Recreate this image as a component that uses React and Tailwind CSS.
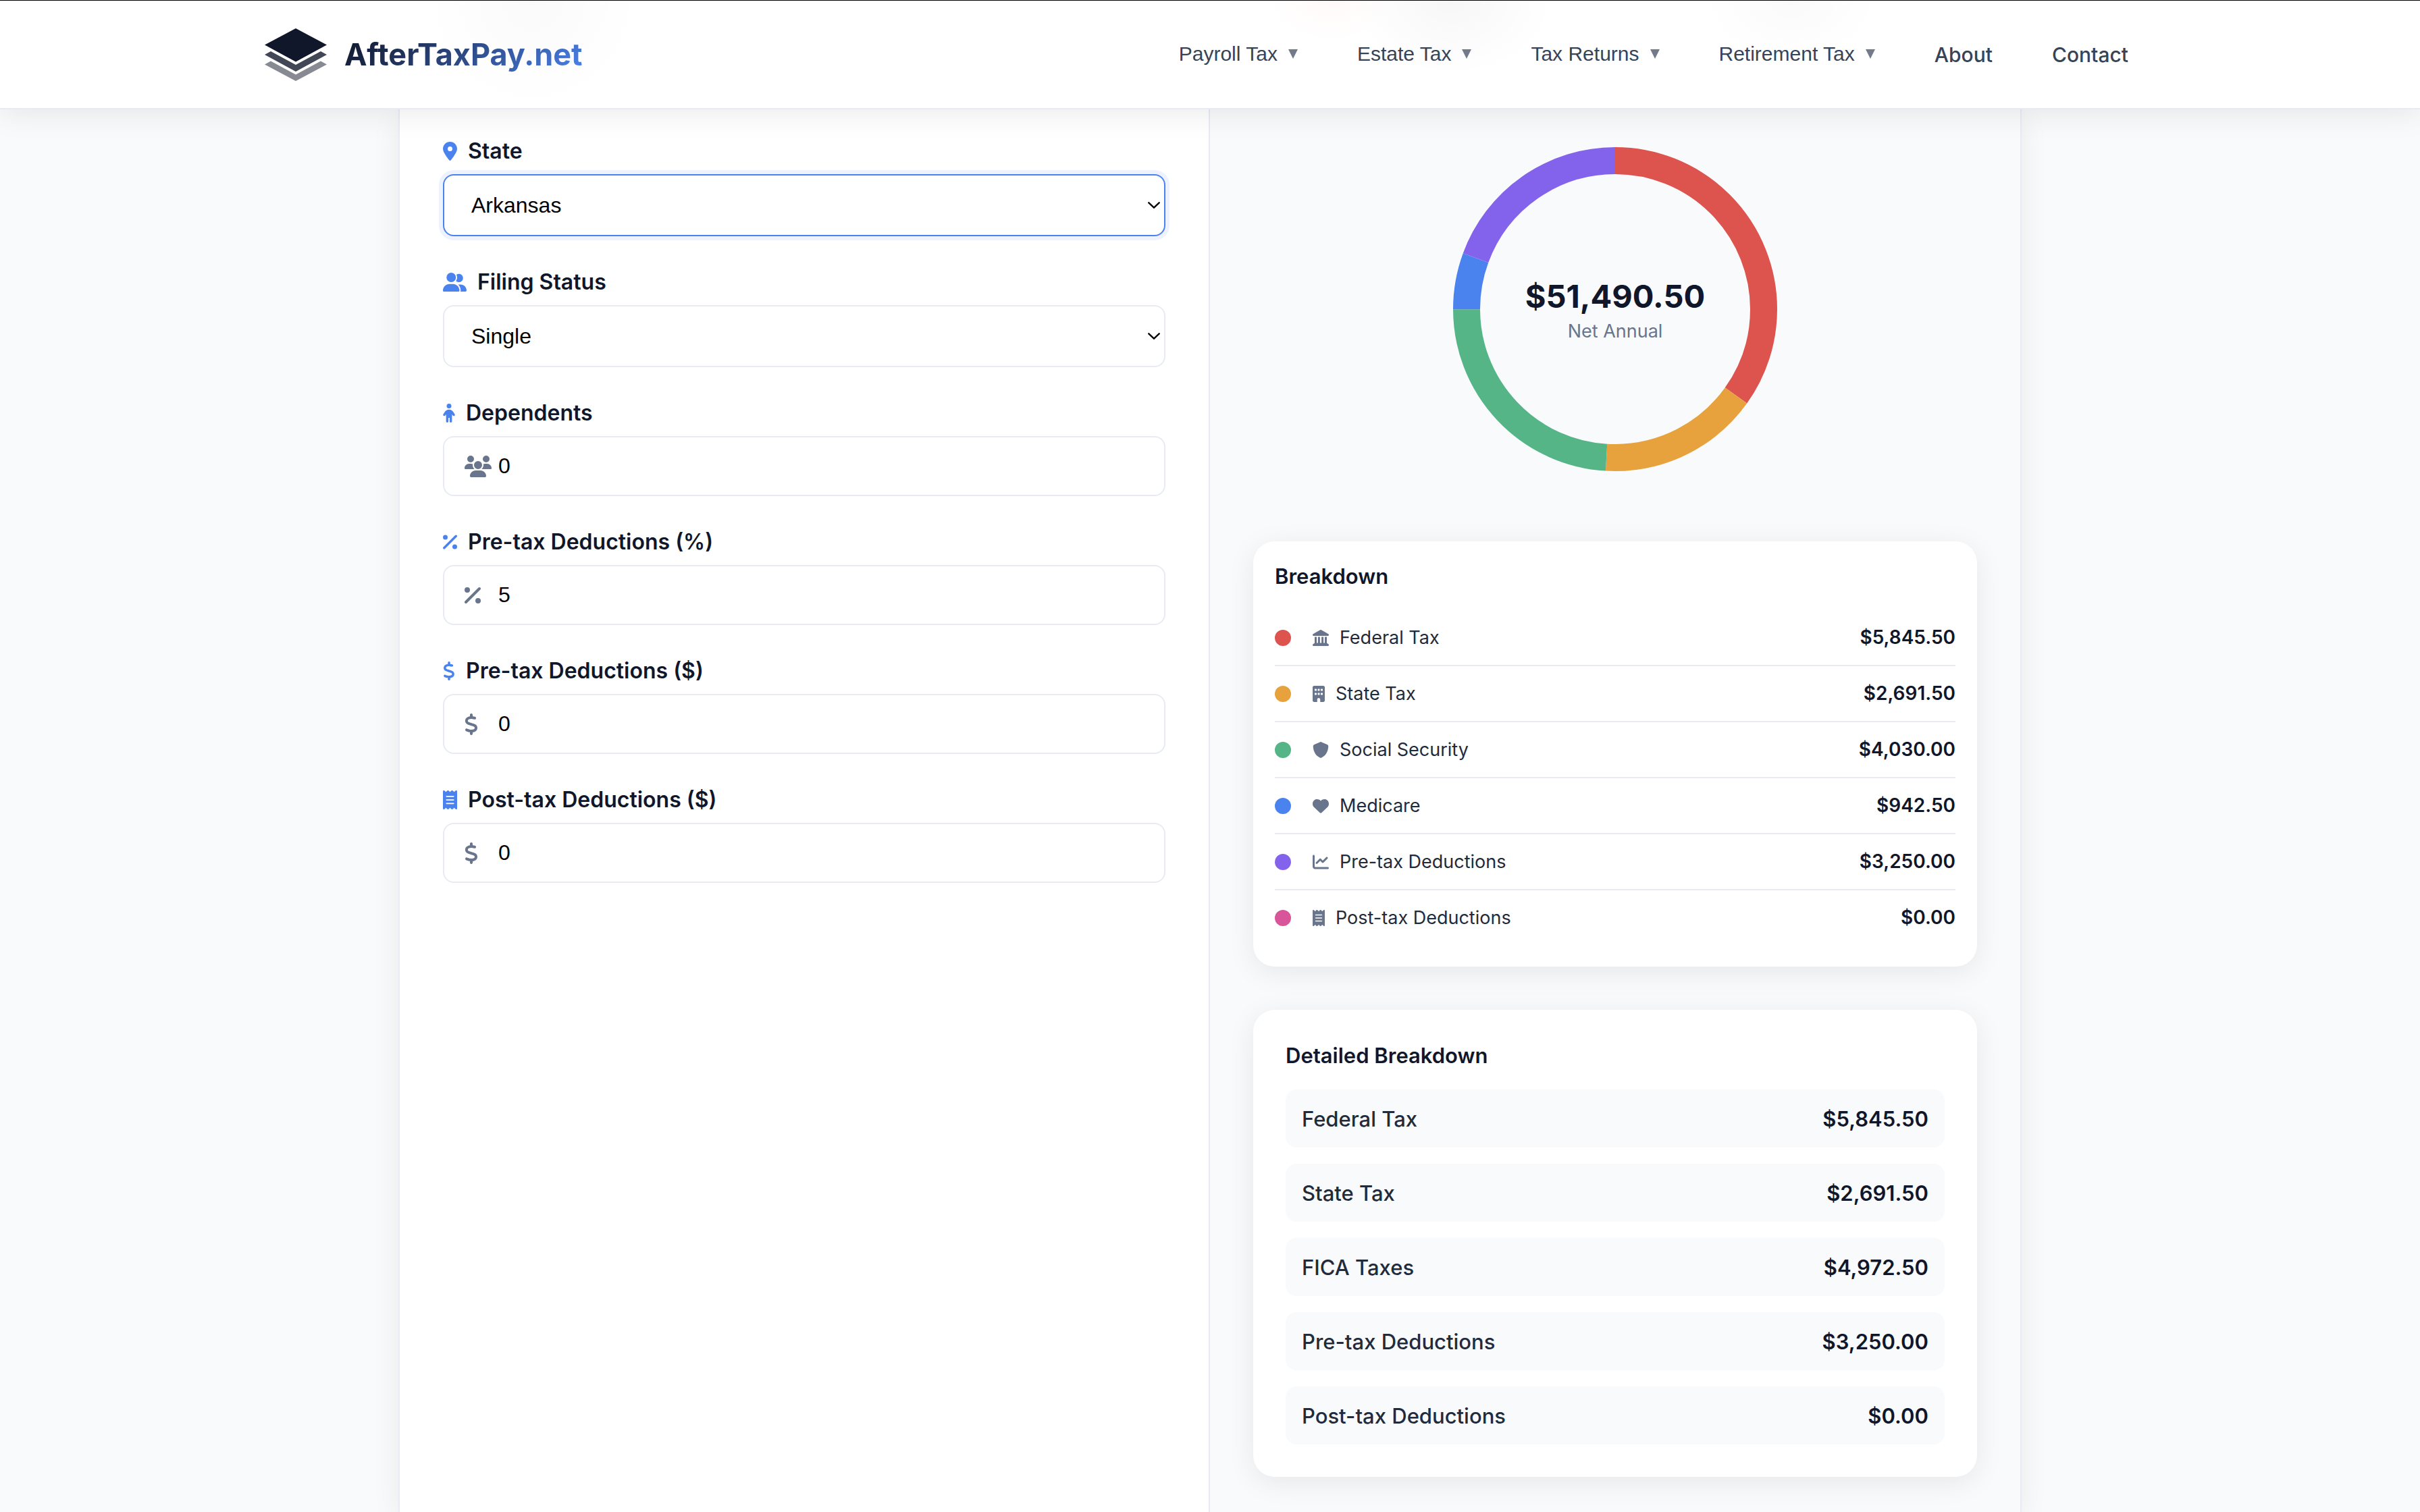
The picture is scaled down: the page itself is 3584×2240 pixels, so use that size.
import { useState } from 'react';
import {
    FaBuilding,
    FaChartLine,
    FaChild,
    FaDollarSign,
    FaHeart,
    FaLandmark,
    FaLocationDot,
    FaPercent,
    FaReceipt,
    FaShield,
    FaUserGroup,
    FaUsers,
} from 'react-icons/fa6';

const MENUS = ['Payroll Tax', 'Estate Tax', 'Tax Returns', 'Retirement Tax'];
const LINKS = ['About', 'Contact'];

const BREAKDOWN = [
    { label: 'Federal Tax', value: 5845.5, icon: FaLandmark, iconWidth: 'w-6', dot: 'bg-[#dd534e]', stroke: 'stroke-[#dd534e]' },
    { label: 'State Tax', value: 2691.5, icon: FaBuilding, iconWidth: 'w-[18px]', dot: 'bg-[#e7a23e]', stroke: 'stroke-[#e7a23e]' },
    { label: 'Social Security', value: 4030, icon: FaShield, iconWidth: 'w-6', dot: 'bg-[#56b587]', stroke: 'stroke-[#56b587]' },
    { label: 'Medicare', value: 942.5, icon: FaHeart, iconWidth: 'w-6', dot: 'bg-[#4b83ee]', stroke: 'stroke-[#4b83ee]' },
    { label: 'Pre-tax Deductions', value: 3250, icon: FaChartLine, iconWidth: 'w-6', dot: 'bg-[#8463ec]', stroke: 'stroke-[#8463ec]' },
    { label: 'Post-tax Deductions', value: 0, icon: FaReceipt, iconWidth: 'w-[18px]', dot: 'bg-[#d95599]', stroke: 'stroke-[#d95599]' },
];

const DETAILS = [
    { label: 'Federal Tax', value: 5845.5 },
    { label: 'State Tax', value: 2691.5 },
    { label: 'FICA Taxes', value: 4972.5 },
    { label: 'Pre-tax Deductions', value: 3250 },
    { label: 'Post-tax Deductions', value: 0 },
];

const money = (n) => n.toLocaleString('en-US', { style: 'currency', currency: 'USD' });

function Logo() {
    return (
        <a href="#" className="flex items-center gap-[26px]">
            <svg viewBox="0 0 92 78" className="w-[92px] h-[78px]" aria-hidden="true">
                <path d="M0 24.5 46 0l46 24.5-46 25z" fill="#10172a" />
                <path d="M0 39l9-5 37 20 37-20 9 5-46 25z" fill="#424756" />
                <path d="M0 53.5l9-5 37 20 37-20 9 5L46 78z" fill="#878a93" />
            </svg>
            <span className="text-[45px] leading-[60px] font-bold text-transparent bg-clip-text bg-linear-135 from-[#10172a] to-[#4b83ee]">
                AfterTaxPay.net
            </span>
        </a>
    );
}

function Header() {
    return (
        <header className="sticky top-0 z-10 bg-white bg-[radial-gradient(160px_160px_at_22%_0%,rgba(0,0,0,0.02),transparent),radial-gradient(90px_60px_at_55%_0%,rgba(255,80,60,0.03),transparent),radial-gradient(150px_110px_at_60%_0%,rgba(0,0,0,0.03),transparent),radial-gradient(130px_90px_at_74%_0%,rgba(0,0,0,0.02),transparent)] border-t border-t-black border-b-2 border-b-[#e8ebf1] shadow-[0_8px_40px_rgba(0,0,0,0.08)]">
            <div className="max-w-[2800px] mx-auto h-[159px] flex items-center justify-between">
                <Logo />
                <nav className="flex items-center gap-2">
                    {MENUS.map((name) => (
                        <button
                            key={name}
                            type="button"
                            className="flex items-center gap-4 px-10 pb-0.5 font-['Liberation_Sans',sans-serif] text-[30px] leading-[36px] text-[#374357]"
                        >
                            {name}
                            <svg viewBox="0 0 14 14" className="w-[14px] h-[14px]" aria-hidden="true">
                                <path d="M0 0h14L7 14z" fill="#737b8a" />
                            </svg>
                        </button>
                    ))}
                    {LINKS.map((name) => (
                        <a key={name} href="#" className="px-10 text-[30px] leading-[36px] font-medium text-[#374357]">
                            {name}
                        </a>
                    ))}
                </nav>
            </div>
        </header>
    );
}

function FieldLabel({ id, icon: Icon, iconWidth, children }) {
    return (
        <label htmlFor={id} className="flex items-center gap-4 mb-[14px] text-[32px] leading-[40px] font-semibold text-[#10172a]">
            <Icon className={`h-[28px] text-[#4b83ee] ${iconWidth}`} />
            {children}
        </label>
    );
}

function SelectField({ id, label, icon, iconWidth, options, active }) {
    return (
        <div>
            <FieldLabel id={id} icon={icon} iconWidth={iconWidth}>{label}</FieldLabel>
            <div className="relative">
                <select
                    id={id}
                    className={`block w-full h-[92px] pl-10 pr-16 appearance-none rounded-2xl border-2 bg-white font-['Liberation_Sans',sans-serif] text-[32px] text-black outline-none ${active
                            ? 'border-[#4b83ee] shadow-[0_0_0_6px_rgba(75,131,238,0.1)]'
                            : 'border-[#e8ebf1]'
                        }`}
                >
                    {options.map((o) => <option key={o}>{o}</option>)}
                </select>
                <svg viewBox="0 0 18 10" className="absolute right-2 top-1/2 -translate-y-1/2 w-[18px] h-[10px] pointer-events-none" aria-hidden="true">
                    <path d="M1.3 1.3 9 8.6l7.7-7.3" fill="none" stroke="#000" strokeWidth="2.4" strokeLinecap="round" />
                </svg>
            </div>
        </div>
    );
}

function NumberField({ id, label, icon, iconWidth, inner: Inner, innerWidth, initial }) {
    const [value, setValue] = useState(initial);

    return (
        <div>
            <FieldLabel id={id} icon={icon} iconWidth={iconWidth}>{label}</FieldLabel>
            <div className="relative">
                <Inner className={`absolute left-8 top-1/2 -translate-y-1/2 h-8 text-[#68758c] ${innerWidth}`} />
                <input
                    id={id}
                    type="text"
                    inputMode="decimal"
                    value={value}
                    onChange={(e) => setValue(e.target.value)}
                    className="block w-full h-[89px] pl-20 pr-8 rounded-2xl border-2 border-[#e8ebf1] font-['Liberation_Sans',sans-serif] text-[32px] text-black"
                />
            </div>
        </div>
    );
}

function Donut() {
    const total = BREAKDOWN.reduce((sum, b) => sum + b.value, 0);
    let start = 0;

    return (
        <div className="relative w-[480px] h-[480px] mx-auto pt-2 flex flex-col items-center justify-center">
            <svg viewBox="0 0 480 480" className="absolute inset-0 -rotate-90" aria-hidden="true">
                {BREAKDOWN.filter((b) => b.value > 0).map((b) => {
                    const part = (b.value / total) * 100;
                    const offset = -start;
                    start += part;
                    return (
                        <circle
                            key={b.label}
                            cx="240"
                            cy="240"
                            r="220"
                            fill="none"
                            strokeWidth="40"
                            pathLength="100"
                            strokeDasharray={`${part} ${100 - part}`}
                            strokeDashoffset={offset}
                            className={b.stroke}
                        />
                    );
                })}
            </svg>
            <div className="text-[47px] leading-[58px] font-bold text-[#10172a]">$51,490.50</div>
            <div className="text-[27px] leading-[46px] text-[#68758c]">Net Annual</div>
        </div>
    );
}

export default function App() {
    return (
        <div className="min-h-screen flex flex-col bg-[#f9fafc] font-[Inter,sans-serif]">
            <Header />

            <main className="flex-1 w-full max-w-[2400px] mx-auto grid grid-cols-2 shadow-[0_0_0_2px_#e8ebf3,0_8px_40px_rgba(0,0,0,0.08)]">
                {/* Inputs */}
                <form className="bg-white border-r-2 border-[#e8ebf3] px-16 pt-[42px] pb-12 flex flex-col gap-12">
                    <SelectField id="state" label="State" icon={FaLocationDot} iconWidth="w-[21px]" options={['Arkansas', 'California', 'Texas']} active />
                    <SelectField id="filing" label="Filing Status" icon={FaUserGroup} iconWidth="w-[35px]" options={['Single', 'Married']} />
                    <NumberField id="dependents" label="Dependents" icon={FaChild} iconWidth="w-[18px]" inner={FaUsers} innerWidth="w-10" initial="0" />
                    <NumberField id="pre-percent" label="Pre-tax Deductions (%)" icon={FaPercent} iconWidth="w-[21px]" inner={FaPercent} innerWidth="w-6" initial="5" />
                    <NumberField id="pre-dollar" label="Pre-tax Deductions ($)" icon={FaDollarSign} iconWidth="w-[18px]" inner={FaDollarSign} innerWidth="w-5" initial="0" />
                    <NumberField id="post-dollar" label="Post-tax Deductions ($)" icon={FaReceipt} iconWidth="w-[21px]" inner={FaDollarSign} innerWidth="w-5" initial="0" />
                </form>

                {/* Results */}
                <div className="bg-[#f9fafc] px-16 pt-14 pb-12">
                    <Donut />

                    <section className="mt-[104px] p-8 rounded-[32px] bg-white shadow-[0_8px_40px_rgba(0,0,0,0.08)]">
                        <h2 className="mb-[30px] text-[31px] leading-[40px] font-semibold text-[#10172a]">Breakdown</h2>
                        <ul>
                            {BREAKDOWN.map(({ label, value, icon: Icon, iconWidth, dot }) => (
                                <li key={label} className="flex items-center py-[22px] border-b-2 border-[#e8ebf3] last:border-b-0 text-[27px] leading-[37px]">
                                    <span className={`w-6 h-6 mr-8 rounded-full ${dot}`} />
                                    <Icon className={`h-6 mr-4 text-[#68758c] ${iconWidth}`} />
                                    <span className="flex-1 text-[#212b3b]">{label}</span>
                                    <span className="text-[28px] font-semibold text-[#10172a]">{money(value)}</span>
                                </li>
                            ))}
                        </ul>
                    </section>

                    <section className="mt-16 p-12 rounded-[32px] bg-white shadow-[0_8px_40px_rgba(0,0,0,0.08)]">
                        <h2 className="mb-[30px] text-[31px] leading-[40px] font-semibold text-[#10172a]">Detailed Breakdown</h2>
                        <ul className="flex flex-col gap-6">
                            {DETAILS.map(({ label, value }) => (
                                <li key={label} className="flex items-center justify-between px-6 pt-[25px] pb-[23px] rounded-2xl bg-[#f9fafc] text-[31px] leading-[38px]">
                                    <span className="font-medium text-[#212b3b]">{label}</span>
                                    <span className="font-semibold text-[#10172a]">{money(value)}</span>
                                </li>
                            ))}
                        </ul>
                    </section>
                </div>
            </main>
        </div>
    );
}
